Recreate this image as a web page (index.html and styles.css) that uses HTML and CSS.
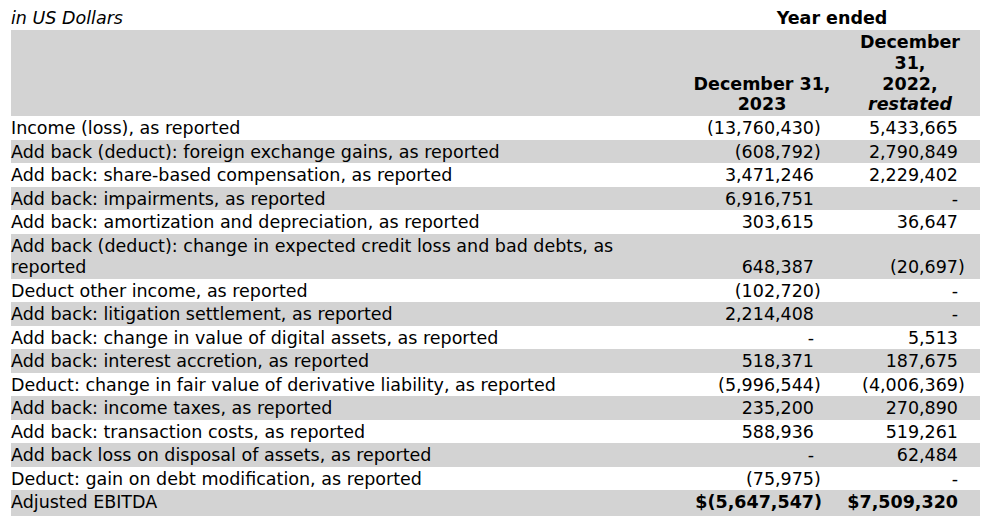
FILE: index.html
```html
<!DOCTYPE html>
<html lang="en">
<head>
<meta charset="utf-8">
<title>Adjusted EBITDA</title>
<link rel="stylesheet" href="styles.css">
</head>
<body>
<div class="report">
<table class="ebitda">
<colgroup>
<col class="c-label"><col class="c-num"><col class="c-par"><col class="c-gap"><col class="c-num2"><col class="c-par"><col class="c-end">
</colgroup>
<thead>
<tr class="top">
<td class="units">in US Dollars</td>
<th colspan="6" class="year">Year ended</th>
</tr>
<tr class="heads">
<td></td>
<th colspan="3" class="h1"><span class="ln">December 31,</span><span class="ln">2023</span></th>
<th colspan="3" class="h2"><span class="ln">December</span><span class="ln">31,</span><span class="ln">2022,</span><span class="ln"><em>restated</em></span></th>
</tr>
</thead>
<tbody>
<tr><td class="lbl">Income (loss), as reported</td><td class="num">(13,760,430</td><td class="par">)</td><td></td><td class="num">5,433,665</td><td class="par"></td><td></td></tr>
<tr><td class="lbl">Add back (deduct): foreign exchange gains, as reported</td><td class="num">(608,792</td><td class="par">)</td><td></td><td class="num">2,790,849</td><td class="par"></td><td></td></tr>
<tr><td class="lbl">Add back: share-based compensation, as reported</td><td class="num">3,471,246</td><td class="par"></td><td></td><td class="num">2,229,402</td><td class="par"></td><td></td></tr>
<tr><td class="lbl">Add back: impairments, as reported</td><td class="num">6,916,751</td><td class="par"></td><td></td><td class="num">-</td><td class="par"></td><td></td></tr>
<tr><td class="lbl">Add back: amortization and depreciation, as reported</td><td class="num">303,615</td><td class="par"></td><td></td><td class="num">36,647</td><td class="par"></td><td></td></tr>
<tr><td class="lbl">Add back (deduct): change in expected credit loss and bad debts, as reported</td><td class="num">648,387</td><td class="par"></td><td></td><td class="num">(20,697</td><td class="par">)</td><td></td></tr>
<tr><td class="lbl">Deduct other income, as reported</td><td class="num">(102,720</td><td class="par">)</td><td></td><td class="num">-</td><td class="par"></td><td></td></tr>
<tr><td class="lbl">Add back: litigation settlement, as reported</td><td class="num">2,214,408</td><td class="par"></td><td></td><td class="num">-</td><td class="par"></td><td></td></tr>
<tr><td class="lbl">Add back: change in value of digital assets, as reported</td><td class="num">-</td><td class="par"></td><td></td><td class="num">5,513</td><td class="par"></td><td></td></tr>
<tr><td class="lbl">Add back: interest accretion, as reported</td><td class="num">518,371</td><td class="par"></td><td></td><td class="num">187,675</td><td class="par"></td><td></td></tr>
<tr><td class="lbl">Deduct: change in fair value of derivative liability, as reported</td><td class="num">(5,996,544</td><td class="par">)</td><td></td><td class="num">(4,006,369</td><td class="par">)</td><td></td></tr>
<tr><td class="lbl">Add back: income taxes, as reported</td><td class="num">235,200</td><td class="par"></td><td></td><td class="num">270,890</td><td class="par"></td><td></td></tr>
<tr><td class="lbl">Add back: transaction costs, as reported</td><td class="num">588,936</td><td class="par"></td><td></td><td class="num">519,261</td><td class="par"></td><td></td></tr>
<tr><td class="lbl">Add back loss on disposal of assets, as reported</td><td class="num">-</td><td class="par"></td><td></td><td class="num">62,484</td><td class="par"></td><td></td></tr>
<tr><td class="lbl">Deduct: gain on debt modification, as reported</td><td class="num">(75,975</td><td class="par">)</td><td></td><td class="num">-</td><td class="par"></td><td></td></tr>
<tr class="total"><td class="lbl">Adjusted EBITDA</td><td class="num">$(5,647,547</td><td class="par">)</td><td></td><td class="num">$7,509,320</td><td class="par"></td><td></td></tr>
</tbody>
</table>
</div>
</body>
</html>
```
FILE: styles.css
```css
html, body {
  margin: 0;
  padding: 0;
  background: #ffffff;
}

.report {
  padding: 6px 0 0 11px;
  font-family: "DejaVu Sans", Verdana, sans-serif;
  font-size: 17.5px;
  color: #000000;
}

.ebitda {
  border-collapse: collapse;
  border-spacing: 0;
  table-layout: fixed;
  width: 969px;
}

.c-label { width: 673px; }
.c-num { width: 130px; }
.c-num2 { width: 124px; }
.c-par { width: 10px; }
.c-gap { width: 10px; }
.c-end { width: 12px; }

.ebitda td,
.ebitda th {
  padding: 2px 0 0 0;
  line-height: 21.5px;
  vertical-align: bottom;
}

.top td,
.top th {
  height: 21.3px;
}

.units {
  font-style: italic;
  text-align: left;
}

.year {
  font-weight: bold;
  text-align: center;
  padding-right: 8px;
}

.heads {
  background: #d3d3d3;
}

.heads th {
  font-weight: bold;
  text-align: center;
  line-height: 20.75px;
  padding: 2.6px 0 1.4px 0;
}

.heads .h1 {
  padding-left: 6px;
}

.heads .h2 {
  padding-left: 20px;
  padding-right: 14px;
}

.ln {
  display: block;
  white-space: nowrap;
}

.lbl {
  text-align: left;
  padding-right: 44px;
}

.num {
  text-align: right;
  white-space: nowrap;
}

.par {
  text-align: left;
}

.ebitda tbody tr:nth-child(even) {
  background: #d3d3d3;
}

.total td {
  padding-bottom: 2px;
}

.total .num,
.total .par {
  font-weight: bold;
}
```
